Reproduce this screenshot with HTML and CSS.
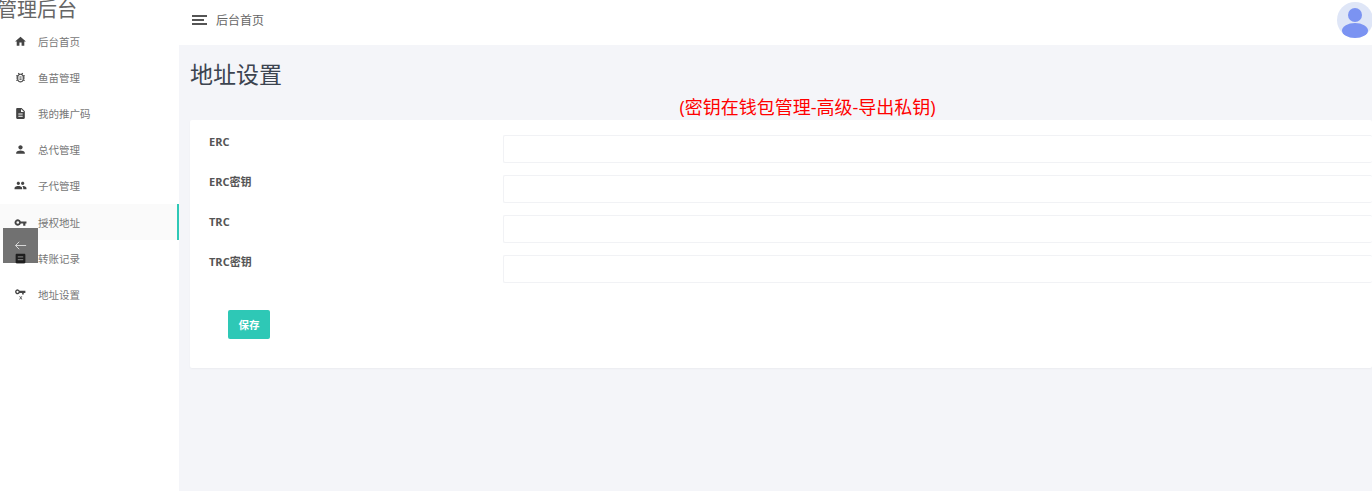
FILE: index.html
```html
<!DOCTYPE html>
<html>
    <head>
        <meta charset="UTF-8" />
        <title>地址设置</title>
        <link rel="stylesheet" href="styles.css">
    </head>
    <body>
        <div class="sidebar">
            <div class="brand">管理后台</div>
            <ul class="menu">
                <li class="item">
                    <svg class="icon" viewBox="0 0 24 24"><path d="M10 20v-6h4v6h5v-8h3L12 3 2 12h3v8z"/></svg>
                    <span>后台首页</span>
                </li>
                <li class="item">
                    <svg class="icon" viewBox="0 0 24 24"><path d="M20 8h-2.810c-.45-.78-1.070-1.450-1.820-1.960L17 4.410 15.590 3l-2.170 2.170C12.960 5.060 12.490 5 12 5c-.49 0-.96.06-1.410.17L8.410 3 7 4.410l1.620 1.630C7.880 6.550 7.260 7.220 6.810 8H4v2h2.090c-.05.33-.09.66-.09 1v1H4v2h2v1c0 .34.04.67.09 1H4v2h2.810c1.040 1.790 2.970 3 5.190 3s4.150-1.210 5.190-3H20v-2h-2.090c.05-.33.09-.66.09-1v-1h2v-2h-2v-1c0-.34-.04-.67-.09-1H20V8zm-4 7c0 2.210-1.790 4-4 4s-4-1.790-4-4v-4c0-2.210 1.790-4 4-4s4 1.790 4 4v4zm-6-1h4v2h-4zm0-4h4v2h-4z"/></svg>
                    <span>鱼苗管理</span>
                </li>
                <li class="item">
                    <svg class="icon" viewBox="0 0 24 24"><path d="M14 2H6c-1.100 0-2 .9-2 2v16c0 1.100.9 2 2 2h12c1.100 0 2-.9 2-2V8zm2 16H8v-2h8zm0-4H8v-2h8zm-3-5V3.500L18.500 9z" fill-rule="evenodd"/></svg>
                    <span>我的推广码</span>
                </li>
                <li class="item">
                    <svg class="icon" viewBox="0 0 24 24"><path d="M12 12c2.200 0 4-1.800 4-4s-1.800-4-4-4-4 1.800-4 4 1.800 4 4 4zm0 2c-2.700 0-8 1.300-8 4v2h16v-2c0-2.700-5.300-4-8-4z"/></svg>
                    <span>总代管理</span>
                </li>
                <li class="item">
                    <svg class="icon" viewBox="0 0 24 24"><path d="M16 11c1.700 0 3-1.300 3-3s-1.300-3-3-3-3 1.300-3 3 1.300 3 3 3zm-8 0c1.700 0 3-1.300 3-3S9.700 5 8 5 5 6.300 5 8s1.300 3 3 3zm0 2c-2.300 0-7 1.200-7 3.500V19h14v-2.500C15 14.200 10.300 13 8 13zm8 0c-.3 0-.6 0-1 .1 1.200.8 2 1.900 2 3.400V19h6v-2.500c0-2.300-4.700-3.500-7-3.500z"/></svg>
                    <span>子代管理</span>
                </li>
                <li class="item active">
                    <svg class="icon" viewBox="0 0 24 24"><path d="M12.600 10A6 6 0 1 0 12.600 14H17v4h4v-4h2v-4zM7 14.500a2.500 2.500 0 1 1 0-5 2.500 2.500 0 0 1 0 5z" fill-rule="evenodd"/></svg>
                    <span>授权地址</span>
                </li>
                <li class="item">
                    <svg class="icon" viewBox="0 0 24 24"><path d="M19 3H5c-1.100 0-2 .9-2 2v14c0 1.100.9 2 2 2h14c1.100 0 2-.9 2-2V5c0-1.100-.9-2-2-2zM7 8h10v2H7zm0 5h10v2H7z" fill-rule="evenodd"/></svg>
                    <span>转账记录</span>
                </li>
                <li class="item">
                    <svg class="icon" viewBox="0 0 24 24"><path d="M10.500 5a4.500 4.500 0 1 0 0 4H15v3h3V9h3V5zM6.500 9a2 2 0 1 1 0-4 2 2 0 0 1 0 4z" fill-rule="evenodd"/><path d="M9.500 15l1.500 0 1.500 2 1.500-2 1.500 0-2.200 3 2.200 3h-1.500l-1.500-2-1.500 2H9.500l2.200-3z"/></svg>
                    <span>地址设置</span>
                </li>
            </ul>
        </div>

        <div class="main">
            <div class="topbar">
                <div class="burger"><i></i><i></i><i></i></div>
                <span class="crumb">后台首页</span>
                <svg class="avatar" viewBox="0 0 36 36">
                    <circle cx="18" cy="18" r="18" fill="#dfe6f7"/>
                    <circle cx="18" cy="13" r="7" fill="#7b93f2"/>
                    <ellipse cx="18" cy="28.500" rx="13" ry="7.500" fill="#7b93f2"/>
                </svg>
            </div>
            <div class="content">
                <h1 class="title">地址设置</h1>
                <div class="hint">(密钥在钱包管理-高级-导出私钥)</div>
                <form class="card">
                    <div class="row"><label>ERC</label><input type="text"></div>
                    <div class="row"><label>ERC密钥</label><input type="text"></div>
                    <div class="row"><label>TRC</label><input type="text"></div>
                    <div class="row"><label>TRC密钥</label><input type="text"></div>
                    <button type="button" class="save">保存</button>
                </form>
            </div>
        </div>

        <div class="backbtn">
            <svg viewBox="0 0 24 24"><path d="M21 12H4M10 6l-6 6 6 6" fill="none" stroke="#ddd" stroke-width="1.500"/></svg>
        </div>
    </body>
</html>
```

FILE: styles.css
```css
* {
  margin: 0;
  padding: 0;
  box-sizing: border-box;
  font-family: "Open Sans", "Noto Sans CJK SC", sans-serif;
}

html, body {
  width: 100%;
  height: 100%;
  overflow: hidden;
}

body {
  display: flex;
  background: #f4f5f9;
  color: #555;
}

.sidebar {
  width: 179px;
  flex-shrink: 0;
  background: #fff;
  overflow: hidden;
}

.brand {
  height: 27px;
  margin-left: -3px;
  margin-top: -4px;
  font-size: 20px;
  line-height: 28px;
  color: #666;
  white-space: nowrap;
}

.menu {
  list-style: none;
}

.item {
  display: flex;
  align-items: center;
  height: 36.200px;
  padding-left: 14px;
  font-size: 10.500px;
  color: #777;
}

.item.active {
  background: #fafafa;
  border-right: 2px solid #2ec8b6;
}

.icon {
  width: 13px;
  height: 13px;
  margin-right: 11px;
  fill: #444;
}

.main {
  flex: 1;
  min-width: 0;
}

.topbar {
  display: flex;
  align-items: center;
  height: 45px;
  padding: 0 0 5px 13px;
  background: #fff;
}

.burger {
  display: flex;
  flex-direction: column;
  gap: 2px;
  width: 15px;
  margin-right: 9px;
}

.burger i {
  height: 2px;
  background: #555;
}

.burger i:nth-child(2) {
  width: 12px;
}

.crumb {
  font-size: 12px;
  color: #666;
}

.avatar {
  align-self: flex-start;
  width: 36px;
  height: 36px;
  margin: 2px -1px 0 auto;
}

.content {
  padding: 13px 0 0 11px;
}

.title {
  font-size: 23px;
  font-weight: 400;
  line-height: 32px;
  color: #3c4450;
}

.hint {
  margin-top: 5px;
  padding-left: 53px;
  font-size: 18px;
  line-height: 24px;
  color: #f00;
  text-align: center;
}

.card {
  height: 248px;
  margin-top: 1px;
  padding-top: 15px;
  background: #fff;
  border-radius: 2px;
  box-shadow: 0 1px 2px rgba(0, 0, 0, .04);
}

.row {
  display: flex;
  height: 28px;
  margin-bottom: 12px;
  padding-left: 19px;
}

.row label {
  width: 294px;
  font-size: 11px;
  font-weight: 700;
  line-height: 13px;
  color: #555;
}

.row input {
  flex: 1;
  min-width: 0;
  border: 1px solid #f1f2f5;
  border-right: 0;
  border-radius: 2px;
  outline: none;
}

.save {
  display: block;
  width: 42px;
  height: 29px;
  margin: 27px 0 0 38px;
  border: 0;
  border-radius: 2px;
  background: #2ec8b6;
  color: #fff;
  font-size: 10.500px;
  font-weight: 600;
}

.backbtn {
  position: absolute;
  left: 3px;
  top: 228px;
  display: flex;
  align-items: center;
  justify-content: center;
  width: 35px;
  height: 35px;
  background: rgba(0, 0, 0, .55);
}

.backbtn svg {
  width: 15px;
  height: 15px;
}
```
